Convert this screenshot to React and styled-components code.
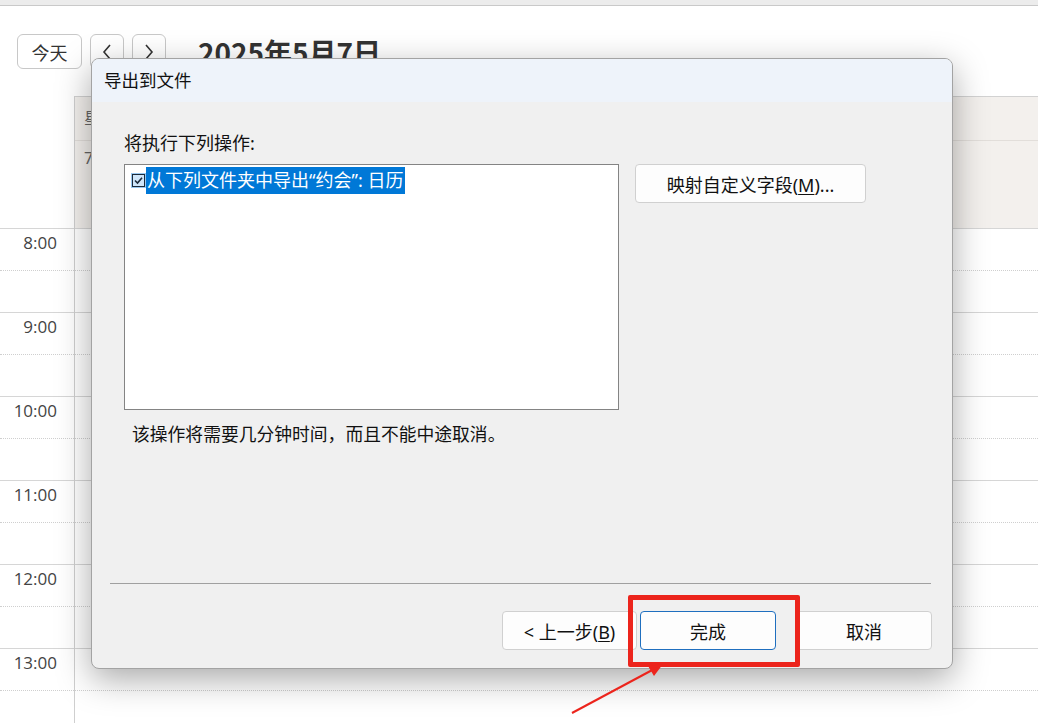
import React from 'react';
import styled, { createGlobalStyle } from 'styled-components';

const GlobalStyle = createGlobalStyle`
  html, body {
    margin: 0;
    padding: 0;
    background: #ffffff;
    overflow: hidden;
  }
  body {
    font-family: "Noto Sans", "Noto Sans CJK SC", sans-serif;
  }
`;

const Page = styled.div`
  position: relative;
  width: 1038px;
  height: 723px;
  overflow: hidden;
  background: #fff;
`;

const TopBar = styled.div`
  height: 5px;
  background: #ececec;
  border-bottom: 1px solid #c9c9c9;
`;

const Toolbar = styled.div`
  height: 90px;
  box-sizing: border-box;
  padding: 28px 0 0 17px;
  display: flex;
  align-items: flex-start;
  gap: 8px;
`;

const ToolButton = styled.button`
  height: 35px;
  width: ${p => p.w || 34}px;
  box-sizing: border-box;
  border: 1px solid #c8c8c8;
  border-radius: 6px;
  background: #fff;
  color: #333;
  font-family: "Noto Sans CJK SC", sans-serif;
  font-size: 18px;
  display: flex;
  align-items: center;
  justify-content: center;
  padding: 0;
`;

const Title = styled.div`
  margin-left: 24px;
  margin-top: 1px;
  font-family: "Noto Sans CJK SC", sans-serif;
  font-weight: 700;
  font-size: 28px;
  line-height: 34px;
  color: #333;
`;

const Body = styled.div`
  display: flex;
`;

const TimeCol = styled.div`
  width: 75px;
  flex: none;
  box-sizing: border-box;
  border-right: 1px solid #cfcfcf;
`;

const HeaderSpacer = styled.div`
  height: 132px;
`;

const DayCol = styled.div`
  flex: 1;
`;

const DayHeader = styled.div`
  height: 132px;
  box-sizing: border-box;
  background: #f3f0ed;
  border-top: 1px solid #d2d2d2;
  display: flex;
  flex-direction: column;
`;

const DayHeaderTop = styled.div`
  height: 43px;
  border-bottom: 1px solid #e2deda;
  padding-left: 9px;
  font-size: 16px;
  line-height: 43px;
  color: #666;
`;

const DayHeaderBottom = styled.div`
  padding-left: 9px;
  font-size: 16px;
  line-height: 34px;
  color: #666;
`;

const Slot = styled.div`
  position: relative;
  height: 84px;
  box-sizing: border-box;
  border-top: 1px solid #d6d6d6;
  &::after {
    content: "";
    position: absolute;
    left: 0;
    right: 0;
    top: 41px;
    border-top: 1px dotted #cfcfcf;
  }
`;

const TimeLabel = styled.div`
  text-align: right;
  padding: 3px 17px 0 0;
  font-family: "Open Sans", "Noto Sans", sans-serif;
  font-size: 17px;
  line-height: 22px;
  color: #444;
`;

const Dialog = styled.div`
  position: absolute;
  left: 91px;
  top: 58px;
  width: 862px;
  height: 611px;
  box-sizing: border-box;
  border: 1px solid #a3a3a3;
  border-radius: 8px;
  background: #f0f0f0;
  box-shadow: 0 10px 34px rgba(0, 0, 0, 0.34);
  overflow: hidden;
  display: flex;
  flex-direction: column;
  color: #111;
  font-size: 18px;
`;

const DialogTitle = styled.div`
  height: 43px;
  flex: none;
  background: #eef3fa;
  padding-left: 12px;
  line-height: 43px;
  font-size: 17.5px;
`;

const DialogBody = styled.div`
  flex: 1;
  padding: 28px 0 0 32px;
`;

const Label = styled.div`
  line-height: 26px;
`;

const Row = styled.div`
  margin-top: 8px;
  display: flex;
  align-items: flex-start;
  gap: 16px;
`;

const ListBox = styled.div`
  width: 495px;
  height: 246px;
  box-sizing: border-box;
  background: #fff;
  border: 1px solid #848484;
  padding: 2px 0 0 6px;
`;

const ListItem = styled.div`
  display: flex;
  align-items: center;
  height: 27px;
`;

const Check = styled.span`
  width: 15px;
  height: 15px;
  box-sizing: border-box;
  background: #9ac8ef;
  display: flex;
  align-items: center;
  justify-content: center;
  svg { display: block; }
`;

const Selected = styled.span`
  background: #0078d7;
  color: #fff;
  height: 27px;
  line-height: 27px;
  padding: 0 2px 0 1px;
`;

const Button = styled.button`
  width: ${p => p.w || 136}px;
  height: 39px;
  box-sizing: border-box;
  border: 1px solid ${p => (p.primary ? '#1f6fbf' : '#d0d0d0')};
  border-radius: 4px;
  background: #fdfdfd;
  color: #111;
  font-family: "Noto Sans", "Noto Sans CJK SC", sans-serif;
  font-size: 18px;
  padding: 0;
  u { text-decoration: underline; text-underline-offset: 2px; }
`;

const Note = styled.div`
  margin-top: 11px;
  padding-left: 8px;
  line-height: 26px;
  font-size: 17.8px;
`;

const Separator = styled.div`
  margin: 0 21px 0 18px;
  border-top: 1px solid #a0a0a0;
`;

const Footer = styled.div`
  flex: none;
  display: flex;
  justify-content: flex-end;
  padding: 27px 20px 18px 0;
  gap: 20px;
`;

const Pair = styled.div`
  display: flex;
  gap: 3px;
`;

const Highlight = styled.div`
  position: absolute;
  left: 628px;
  top: 595px;
  width: 172px;
  height: 72px;
  box-sizing: border-box;
  border: 5px solid #ec241c;
  border-radius: 2px;
`;

const Arrow = styled.svg`
  position: absolute;
  left: 560px;
  top: 655px;
`;

const hours = ['8:00', '9:00', '10:00', '11:00', '12:00', '13:00', ''];

const Chevron = ({ dir }) => (
  <svg width="12" height="18" viewBox="0 0 12 18">
    <path
      d={dir === 'left' ? 'M9 2 L3 9 L9 16' : 'M3 2 L9 9 L3 16'}
      fill="none"
      stroke="#333"
      strokeWidth="1.6"
    />
  </svg>
);

export default function App() {
  return (
    <Page>
      <GlobalStyle />
      <TopBar />
      <Toolbar>
        <ToolButton w={65}>今天</ToolButton>
        <ToolButton><Chevron dir="left" /></ToolButton>
        <ToolButton><Chevron dir="right" /></ToolButton>
        <Title>2025年5月7日</Title>
      </Toolbar>
      <Body>
        <TimeCol>
          <HeaderSpacer />
          {hours.map((h, i) => (
            <Slot key={i}>
              <TimeLabel>{h}</TimeLabel>
            </Slot>
          ))}
        </TimeCol>
        <DayCol>
          <DayHeader>
            <DayHeaderTop>星期三</DayHeaderTop>
            <DayHeaderBottom>7</DayHeaderBottom>
          </DayHeader>
          {hours.map((h, i) => (
            <Slot key={i} />
          ))}
        </DayCol>
      </Body>

      <Dialog>
        <DialogTitle>导出到文件</DialogTitle>
        <DialogBody>
          <Label>将执行下列操作:</Label>
          <Row>
            <ListBox>
              <ListItem>
                <Check>
                  <svg width="13" height="13" viewBox="0 0 13 13">
                    <rect x="0.5" y="0.5" width="12" height="12" fill="#cfe6fa" stroke="#1b2a3a" />
                    <path d="M3 6.5 L5.5 9 L10 3.8" fill="none" stroke="#1b2a3a" strokeWidth="1.6" />
                  </svg>
                </Check>
                <Selected>从下列文件夹中导出“约会”: 日历</Selected>
              </ListItem>
            </ListBox>
            <Button w={231}>映射自定义字段(<u>M</u>)...</Button>
          </Row>
          <Note>该操作将需要几分钟时间，而且不能中途取消。</Note>
        </DialogBody>
        <Separator />
        <Footer>
          <Pair>
            <Button w={135}>&lt; 上一步(<u>B</u>)</Button>
            <Button primary>完成</Button>
          </Pair>
          <Button>取消</Button>
        </Footer>
      </Dialog>

      <Highlight />
      <Arrow width="120" height="70" viewBox="0 0 120 70">
        <line x1="12" y1="58" x2="96" y2="13" stroke="#ec241c" strokeWidth="2" />
        <path d="M103 9 L88 11 L94 21 Z" fill="#ec241c" />
      </Arrow>
    </Page>
  );
}
